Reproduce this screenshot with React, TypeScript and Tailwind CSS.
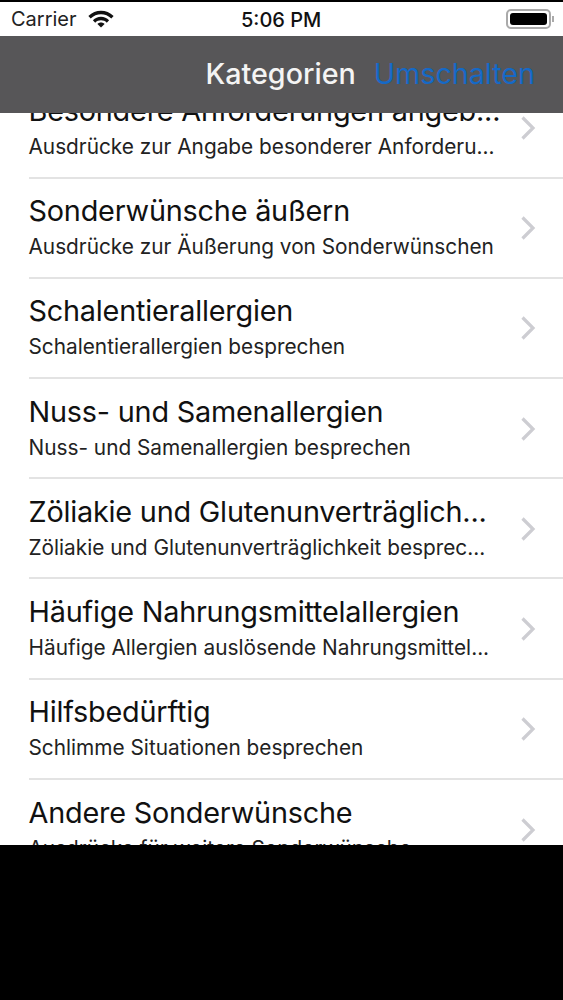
import React from "react";

const rows = [
  ["Besondere Anforderungen angeb...", "Ausdrücke zur Angabe besonderer Anforderu..."],
  ["Sonderwünsche äußern", "Ausdrücke zur Äußerung von Sonderwünschen"],
  ["Schalentierallergien", "Schalentierallergien besprechen"],
  ["Nuss- und Samenallergien", "Nuss- und Samenallergien besprechen"],
  ["Zöliakie und Glutenunverträglich...", "Zöliakie und Glutenunverträglichkeit besprec..."],
  ["Häufige Nahrungsmittelallergien", "Häufige Allergien auslösende Nahrungsmittel..."],
  ["Hilfsbedürftig", "Schlimme Situationen besprechen"],
  ["Andere Sonderwünsche", "Ausdrücke für weitere Sonderwünsche"],
];

function Row({ title, sub, last }: { title: string; sub: string; last: boolean }) {
  return (
    <div className="h-[100.2px] shrink-0 pl-[28.5px]">
      <div className={`h-full flex items-center pr-[27px] ${last ? "" : "border-b-2 border-[#e3e3e3]"}`}>
        <div className="flex-1 min-w-0 pb-[3px]">
          <div className="text-[28.8px] leading-[38px] text-[#111] whitespace-nowrap tracking-[-0.2px]">{title}</div>
          <div className="text-[20.8px] leading-[27px] mt-[3px] text-[#222] whitespace-nowrap">{sub}</div>
        </div>
        <svg width="16" height="26" viewBox="0 0 16 26" className="shrink-0 mt-[1px]" fill="none">
          <path d="M2.5 2.5 L13 13 L2.500 23.500" stroke="#cdcdd2" strokeWidth="3.2" />
        </svg>
      </div>
    </div>
  );
}

export default function App() {
  return (
    <div className="w-[563px] h-[1000px] bg-black flex flex-col overflow-hidden font-['Inter','Liberation_Sans',sans-serif]">
      <div className="h-[2px] shrink-0 bg-black" />
      <div className="h-[34px] shrink-0 bg-white flex items-center pl-[11px] pr-[9px] relative">
        <span className="text-[20px] text-[#222]">Carrier</span>
        <svg width="28" height="20" viewBox="0 0 26 19" className="ml-[10px] mb-[3px]" fill="#111">
          <path d="M13 2.500 C8.500 2.500 4.500 4.300 1 7.500 L3.200 10 C6 7.300 9.300 5.900 13 5.900 C16.700 5.900 20 7.300 22.800 10 L25 7.500 C21.500 4.300 17.500 2.500 13 2.500 Z" />
          <path d="M13 8.400 C10 8.400 7.400 9.600 5.300 11.600 L7.500 13.900 C9 12.500 10.900 11.700 13 11.700 C15.100 11.700 17 12.500 18.500 13.900 L20.700 11.600 C18.600 9.600 16 8.400 13 8.400 Z" />
          <path d="M13 13.800 C11.700 13.800 10.500 14.300 9.600 15.200 L13 18.600 L16.400 15.200 C15.500 14.300 14.300 13.800 13 13.800 Z" />
        </svg>
        <span className="absolute left-[241px] top-[3px] text-[20px] font-medium text-[#111]">5:06 PM</span>
        <div className="ml-auto flex items-center">
          <div className="w-[45px] h-[20px] rounded-[5px] border-2 border-[#aaa] p-[2px]">
            <div className="w-full h-full rounded-[3px] bg-black" />
          </div>
          <div className="w-[2px] h-[6px] bg-[#aaa] ml-[1px]" />
        </div>
      </div>
      <div className="h-[77px] shrink-0 bg-[#575658] flex items-center justify-end pr-[28px] pb-[2px] z-10">
        <span className="text-[28.7px] font-medium text-[#f4f4f4] mr-[18px]">Kategorien</span>
        <span className="text-[28.7px] text-[#1569c7]">Umschalten</span>
      </div>
      <div className="h-[732px] shrink-0 bg-white overflow-hidden flex flex-col">
        <div className="mt-[-34.6px] flex flex-col">
          {rows.map((r, i) => (
            <Row key={r[0]} title={r[0]} sub={r[1]} last={i === rows.length - 1} />
          ))}
        </div>
      </div>
    </div>
  );
}
